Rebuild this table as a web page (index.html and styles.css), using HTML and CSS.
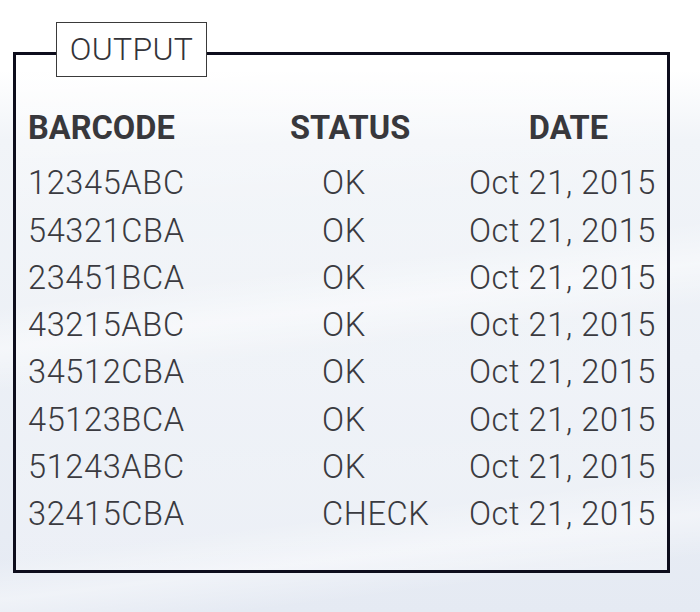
FILE: index.html
```html
<!DOCTYPE html>
<html>
<head>
<meta charset="utf-8">
<link rel="stylesheet" href="styles.css">
</head>
<body>
<div class="page">
  <div class="frame">
    <div class="label">OUTPUT</div>
    <div class="table">
      <div class="th c1">BARCODE</div>
      <div class="th c2">STATUS</div>
      <div class="th c3">DATE</div>

      <div class="td c1">12345ABC</div><div class="td c2">OK</div><div class="td c3">Oct 21, 2015</div>
      <div class="td c1">54321CBA</div><div class="td c2">OK</div><div class="td c3">Oct 21, 2015</div>
      <div class="td c1">23451BCA</div><div class="td c2">OK</div><div class="td c3">Oct 21, 2015</div>
      <div class="td c1">43215ABC</div><div class="td c2">OK</div><div class="td c3">Oct 21, 2015</div>
      <div class="td c1">34512CBA</div><div class="td c2">OK</div><div class="td c3">Oct 21, 2015</div>
      <div class="td c1">45123BCA</div><div class="td c2">OK</div><div class="td c3">Oct 21, 2015</div>
      <div class="td c1">51243ABC</div><div class="td c2">OK</div><div class="td c3">Oct 21, 2015</div>
      <div class="td c1">32415CBA</div><div class="td c2">CHECK</div><div class="td c3">Oct 21, 2015</div>
    </div>
  </div>
</div>
</body>
</html>
```
FILE: styles.css
```css
html, body {
  margin: 0;
  padding: 0;
}
body {
  width: 700px;
  height: 612px;
  overflow: hidden;
  font-family: Roboto, "Liberation Sans", sans-serif;
  background:
    linear-gradient(173deg, rgba(255,255,255,0) 0%, rgba(255,255,255,0) 44%, rgba(255,255,255,0.45) 50%, rgba(255,255,255,0) 56%, rgba(255,255,255,0) 80%, rgba(255,255,255,0.4) 86%, rgba(255,255,255,0) 92%),
    linear-gradient(180deg, #ffffff 0px, #ffffff 70px, #f1f4f8 140px, #ecf0f6 360px, #e5eaf3 612px);
}
.page {
  padding-top: 52px;
  padding-left: 13px;
}
.frame {
  position: relative;
  box-sizing: border-box;
  width: 657px;
  height: 521px;
  border: 3px solid #0d0d1c;
  padding: 50px 11px 0 12px;
  background: linear-gradient(176deg, rgba(255,255,255,0.6) 0%, rgba(255,255,255,0.15) 30%, rgba(255,255,255,0.25) 100%);
}
.label {
  position: absolute;
  left: 40px;
  top: -33px;
  box-sizing: border-box;
  width: 151px;
  height: 55px;
  border: 1.3px solid #3a3a3a;
  background: #ffffff;
  color: #333338;
  font-weight: 300;
  font-size: 32px;
  line-height: 53px;
  letter-spacing: 0.3px;
  text-align: center;
}
.table {
  display: grid;
  grid-template-columns: 262px 1fr auto;
  grid-template-rows: 55.3px;
  grid-auto-rows: 47.3px;
  line-height: 47.3px;
  font-size: 32.6px;
}
.th {
  font-weight: 700;
  color: #38383c;
  height: 47.3px;
}
.th.c3 {
  justify-self: center;
  margin-left: 12px;
}
.td {
  font-weight: 300;
  color: #3a3a40;
  white-space: nowrap;
  letter-spacing: 0.6px;
}
.td.c2 {
  padding-left: 32px;
}
```
